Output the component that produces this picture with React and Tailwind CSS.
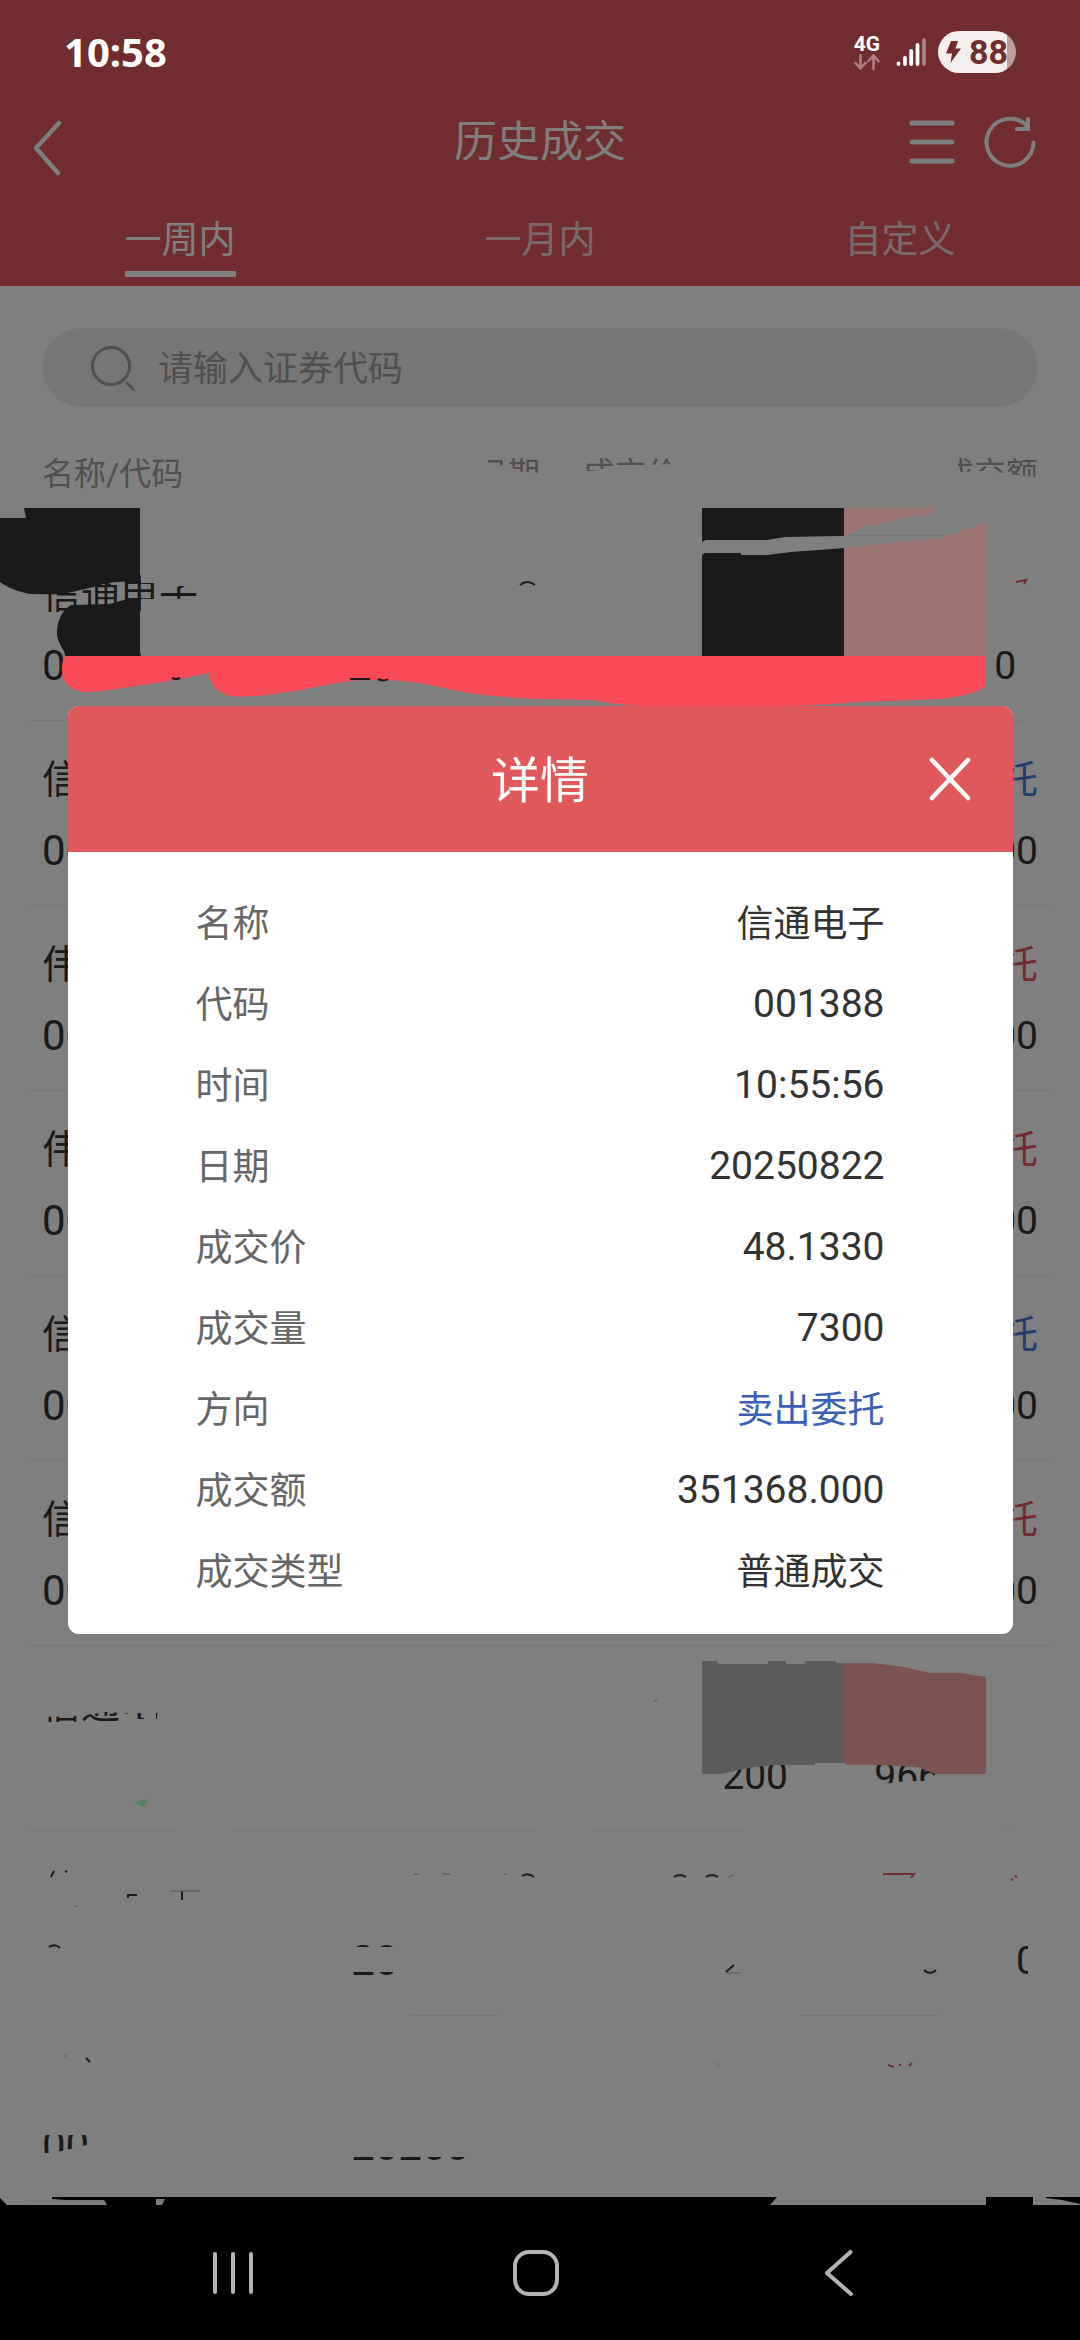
import React, { useState } from "react";

const TABS = ["一周内", "一月内", "自定义"];

const DETAILS = [
  { label: "名称", value: "信通电子" },
  { label: "代码", value: "001388" },
  { label: "时间", value: "10:55:56" },
  { label: "日期", value: "20250822" },
  { label: "成交价", value: "48.1330" },
  { label: "成交量", value: "7300" },
  { label: "方向", value: "卖出委托", blue: true },
  { label: "成交额", value: "351368.000" },
  { label: "成交类型", value: "普通成交" },
];

const TRADES = [
  { name: "信通电子", code: "001388", date: "20250822", amount: "351368.000" },
  { name: "信通电子", code: "001388", side: "卖出委托", amount: "351368.000" },
  { name: "伟隆股份", code: "002871", side: "买入委托", amount: "9660.000" },
  { name: "伟隆股份", code: "002871", side: "买入委托", amount: "9660.000" },
  { name: "信通电子", code: "001388", side: "卖出委托", amount: "9660.000" },
  { name: "信通电子", code: "001388", side: "买入委托", amount: "9660.000" },
  { name: "信通电子", volume: "200", amount: "9660.000" },
  { date: "20250822", amount: "0" },
  { code: "00", date: "20250822" },
];

const StatusBar = () => (
  <div className="relative z-10 flex h-[104px] items-center justify-between px-16 text-white">
    <span className="font-['Noto_Sans','Open_Sans',sans-serif] text-[40px] leading-[48px] font-bold">
      10:58
    </span>
    <div className="flex items-center">
      <div className="flex w-[26px] flex-col items-center">
        <span className="text-[21px] leading-[20px] font-bold">4G</span>
        <svg className="h-4 w-[26px]" viewBox="0 0 26 16" fill="none" stroke="#b07f81" strokeWidth="2.6" strokeLinecap="round" strokeLinejoin="round">
          <path d="M6.500 1v13M1.500 9l5 5.500 5-5.500M19.500 15V2M14.500 7l5-5.500 5 5.500" />
        </svg>
      </div>
      <svg className="ml-4 h-[30px] w-[30px]" viewBox="0 0 30 30" stroke="#fff" strokeWidth="3.800" strokeLinecap="round">
        <path d="M2.500 26.500v.5M9 21v6M15.200 14v13M21.500 8v19" />
        <path d="M28 3v24" stroke="#b07f81" />
      </svg>
      <div className="ml-3 flex h-[42px] w-[78px] items-center justify-center gap-2 rounded-full bg-linear-to-r from-[#f5eeee] from-88% to-[#bf9d9e] to-88% text-[#702c2e]">
        <svg className="h-[22px] w-[15px]" viewBox="0 0 15 22" fill="currentColor">
          <path d="M5 0h7L9.500 7.500H15L4.500 22 6 12.500H0z" />
        </svg>
        <span className="text-[34px] leading-[42px] font-bold">88</span>
      </div>
    </div>
  </div>
);

const TopBar = () => (
  <div className="grid h-[76px] grid-cols-[1fr_auto_1fr] items-center px-8 text-white">
    <button type="button" aria-label="返回" className="justify-self-start pt-3">
      <svg className="h-14 w-8" viewBox="0 0 32 56" fill="none" stroke="currentColor" strokeWidth="4.500" strokeLinecap="round" strokeLinejoin="round">
        <path d="M27 3L4 28l22 25" />
      </svg>
    </button>
    <h1 className="text-[43px] leading-[60px]">历史成交</h1>
    <div className="mr-3 flex items-center gap-[29px] justify-self-end">
      <button type="button" aria-label="菜单">
        <svg className="h-12 w-[46px]" viewBox="0 0 46 48" stroke="currentColor" strokeWidth="5" strokeLinecap="round">
          <path d="M3 5h40M3 24h40M3 43h40" />
        </svg>
      </button>
      <button type="button" aria-label="刷新">
        <svg className="h-[52px] w-[52px]" viewBox="0 0 52 52" fill="none" stroke="currentColor" strokeWidth="4" strokeLinecap="round">
          <path d="M49.500 26.500A23.500 23.500 0 1 1 43 10" />
          <path d="M44 3v10H33" />
        </svg>
      </button>
    </div>
  </div>
);

const SearchBox = () => (
  <label className="mx-[42px] mt-[42px] flex h-[79px] items-center rounded-full bg-[#ededed] pl-12">
    <svg className="h-[46px] w-[46px]" viewBox="0 0 46 46" fill="none" stroke="#a0a0a0" strokeWidth="3" strokeLinecap="round">
      <circle cx="21" cy="21" r="18.500" />
      <path d="M37 38l6.500 6.500" />
    </svg>
    <input
      type="text"
      aria-label="证券代码"
      placeholder="请输入证券代码"
      className="ml-[22px] min-w-0 flex-1 bg-transparent pt-1 text-[35px] leading-[52px] outline-none placeholder:text-[#a0a0a0]"
    />
  </label>
);

const TradeTable = () => (
  <div className="mx-7">
    <table className="w-full table-fixed border-separate border-spacing-0">
      <thead>
        <tr className="h-[129px] text-right text-[32px] text-[#9e9e9e]">
          <th className="w-[30%] pt-1 pl-3.5 text-left font-normal whitespace-nowrap">名称/代码</th>
          <th className="w-1/5 pt-1 font-normal">日期</th>
          <th className="w-1/4 pt-1 pr-2 font-normal whitespace-nowrap">成交价/成交量</th>
          <th className="w-1/4 pt-1 pr-3.5 font-normal">成交额</th>
        </tr>
      </thead>
      <tbody className="text-[39px] leading-[54px] text-[#333]">
        {TRADES.map((trade, i) => (
          <tr key={i} className="h-[185px] text-right align-top">
            <td className="border-b border-[#ebebeb] pt-8 pl-3.5 text-left">
              <div className="h-[54px]">{trade.name}</div>
              <div className="mt-[17px] h-[54px] text-[42px]">{trade.code}</div>
            </td>
            <td className="border-b border-[#ebebeb] pt-[103px]">
              <div className="flex h-[54px] justify-end text-[42px]">{trade.date}</div>
            </td>
            <td className="border-b border-[#ebebeb] pt-[103px] pr-2">{trade.volume}</td>
            <td className="border-b border-[#ebebeb] pt-8 pr-3.5">
              <div className={`h-[54px] ${trade.side === "卖出委托" ? "text-[#4a7bd8]" : "text-[#e1585c]"}`}>
                {trade.side}
              </div>
              <div className="mt-[17px] flex h-[54px] justify-end">{trade.amount}</div>
            </td>
          </tr>
        ))}
      </tbody>
    </table>
  </div>
);

// White brush over the account data, sits below the dim layer
const Wipes = () => (
  <svg className="pointer-events-none absolute top-0 left-0 w-full" viewBox="0 0 1080 2340" aria-hidden="true">
    <g fill="#fff">
      <path d="M465 445h23v45h-23zM503 445h6v30h-6zM470 464l30 1 12 3 10 4 23 1v26h-75z" />
      <path d="M580 471h12l8-2 18-2 27-2 30-1v-18h120v55H580z" />
      <path d="M935 445h23v27h7l20-1 20 2 10 2 25 3v22H935z" />
      <path d="M141 565h70v21h-48l-2-3h-20zM141 599h70v22h-70z" />
      <path d="M141 640h410v45H141z" />
      <path d="M1016 640h26v48h-26zM986 640h9v48h-9z" />
      <path d="M40 1678h165v50h-40v-13l-7-2h-33l-20-1-25 4-40 1zM144 1678h12v50h-12zM125 1719h50v12h-50z" />
      <path d="M870 1784l25-1 10-2h20l10-6 5-20h105v45H870z" />
      <path d="M176 1826h57v8h-57zM534 1826h58v8h-58zM745 1826h259v8H745zM1012 1826h44v8h-44z" />
      <path d="M24 2011h386v8H24zM500 2011h300v8H500zM940 2011h116v8H940z" />
      <path d="M393 1935h150v48H393zM345 1947h50v25h-50z" />
      <path d="M1028 1935h16v48h-16z" />
      <path d="M345 2120h200v37H345zM465 2120h80v50h-80z" />
      <path d="M40 2120h55v15H40zM40 2154l22-3 13-3 15-4v26H40z" />
      <path d="M1021 716h34v8h-34z" />
    </g>
  </svg>
);

// Marker blocks and leftovers on top of the dim layer
const Scribbles = () => (
  <svg className="pointer-events-none absolute top-0 left-0 w-full" viewBox="0 0 1080 2340" aria-hidden="true">
    <g fill="#1a1a1a">
      <path d="M24 508h116v73l-23 1c-17 1-22 6-37 8-20 6-35 4-50 4-20-4-30-12-30-12v-64h26z" />
      <path d="M71 605l39-1 17-5 13-1v58H65c1-5-8-12-8-23s4-22 14-28z" />
      <path d="M702 508h142v28l-4 0-55 1-18 3-61 0-4 2z" />
      <path d="M702 555l3-2h36v2h26l24-3 40-3 13-1v108H702z" />
    </g>
    <g fill="#a07373">
      <path d="M844 508h90l-2 7-20 1-32 8-15 1-15 9-6 1z" />
      <path d="M844 548l66-7 30-2 25-9 21-8v134H844z" />
    </g>
    <path d="M850 535.500h95" stroke="#757575" />
    <path fill="#5c5c5c" d="M702 1661h15l2 3h49v-3h18v3h19v-3h31v2h8v100h-29v2h-40c-25 2-40 6-53 9h-20z" />
    <path fill="#7d5252" d="M844 1663h28l33 4 25 6h30l26 4v97h-51l-17-7-38-2h-33l-3-2z" />
    <path
      fill="#f74a56"
      d="M66 656H986V686C975 694 960 697 940 699L860 702C800 707 740 708 680 708 640 707 610 704 595 700L540 699C500 697 470 695 440 687 410 680 390 680 365 680 340 680 310 690 280 693 260 697 240 697 228 696 215 690 210 683 209 673 190 677 175 680 150 684 120 688 100 692 88 692 75 692 62 685 62 672 61 664 64 656 66 656z"
    />
    <g fill="none" stroke="#1a1a1a" strokeWidth="2">
      <path d="M520 585q7-6 15 0M51 1877l3-6M65 1871l2 1M128 1898v-3h9M182 1891v9M49 1947q6-4 11 1" />
      <path d="M522 1876q6-4 12 1M674 1877q6-4 12 0M706 1877q6-4 12 0M172 678q4 2 8 0M350 679h20M378 679q6 3 10 0" />
      <path d="M726 1972l8-7M924 1970q6 6 12 0M86 2058l4 4" />
    </g>
    <g fill="none" stroke="#555" strokeWidth="1">
      <path d="M170 1891h30M414 1874h5M442 1874h8M504 1874h3M728 1877l6-2M726 1973h14M64 2056h2M717 2063l2 4M654 1702l3-3M74 1906h3" />
    </g>
    <g fill="none" stroke="#712d2f" strokeWidth="2">
      <path d="M883 1874h31l-3 4M1011 1880l2-1M1015 1876l2 1M888 2065l6 2M899 2065h2M909 2066l3-3M1016 582l10-2-2 4" />
    </g>
    <path fill="#56805f" d="M134 1803l8-3 6-1-1 5-5 3z" />
    <path d="M0 2198l7 7H0zM52 2197h725l-7 8H162l3-6h-9v6H107l-3-5H66l-14-1zM986 2197h47v8h-47zM1046 2197h34v7l-18-4-16-2z" />
  </svg>
);

const DetailDialog = ({ onClose }) => (
  <div className="absolute inset-0 flex items-center justify-center">
    <section role="dialog" aria-labelledby="detail-title" className="w-7/8 overflow-hidden rounded-[11px] bg-white">
      <header className="grid h-[146px] grid-cols-[1fr_auto_1fr] items-center bg-[#e1585a] px-[42px] text-white">
        <h2 id="detail-title" className="col-start-2 pt-1.5 text-[49px] leading-[72px]">
          详情
        </h2>
        <button type="button" aria-label="关闭" onClick={onClose} className="justify-self-end">
          <svg className="h-11 w-[42px]" viewBox="0 0 42 44" stroke="currentColor" strokeWidth="4.500" strokeLinecap="round">
            <path d="M3 3l36 38M39 3L3 41" />
          </svg>
        </button>
      </header>
      <dl className="px-32 pt-[30px] pb-[23px]">
        {DETAILS.map((item) => (
          <div key={item.label} className="flex h-[81px] items-center justify-between leading-[54px]">
            <dt className="pt-1 text-[37px] text-[#666]">{item.label}</dt>
            <dd
              className={
                item.blue
                  ? "pt-1 text-[37px] text-[#3a5fb8]"
                  : /\d/.test(item.value)
                    ? "text-[39px] text-[#333]"
                    : "pt-1 text-[37px] text-[#333]"
              }
            >
              {item.value}
            </dd>
          </div>
        ))}
      </dl>
    </section>
  </div>
);

const NavBar = () => (
  <nav className="relative z-10 grid h-[135px] grid-cols-3 items-center justify-items-center pr-[90px] pl-[82px] text-[#b3b3b3]">
    <button type="button" aria-label="最近任务">
      <svg className="h-11 w-10" viewBox="0 0 40 44" stroke="currentColor" strokeWidth="4" strokeLinecap="round">
        <path d="M2 3v38M20 3v38M38 3v38" />
      </svg>
    </button>
    <button type="button" aria-label="主屏幕">
      <svg className="h-[46px] w-[46px]" viewBox="0 0 46 46" fill="none" stroke="currentColor" strokeWidth="4">
        <rect x="2" y="2" width="42" height="42" rx="14" />
      </svg>
    </button>
    <button type="button" aria-label="返回">
      <svg className="h-[46px] w-7" viewBox="0 0 28 46" fill="none" stroke="currentColor" strokeWidth="4" strokeLinecap="round" strokeLinejoin="round">
        <path d="M25.500 2L2 23l24 21" />
      </svg>
    </button>
  </nav>
);

const App = () => {
  const [activeTab, setActiveTab] = useState("一周内");
  const [showDetail, setShowDetail] = useState(true);

  return (
    <div className="relative flex min-h-screen flex-col bg-black font-[Roboto,'Noto_Sans_CJK_SC',sans-serif]">
      <div className="bg-[#e1585c]">
        <StatusBar />
        <TopBar />
        <div className="grid grid-cols-3 justify-items-center pt-[31px] pb-[9px]">
          {TABS.map((tab) => (
            <button
              key={tab}
              type="button"
              onClick={() => setActiveTab(tab)}
              className={`border-b-6 text-[37px] leading-[60px] ${
                activeTab === tab ? "border-white text-white" : "border-transparent text-white/75"
              }`}
            >
              {tab}
            </button>
          ))}
        </div>
      </div>

      <main className="flex-1 bg-white">
        <SearchBox />
        <TradeTable />
      </main>

      <NavBar />

      <Wipes />
      {showDetail && (
        <>
          <div className="absolute inset-0 bg-black/50" />
          <Scribbles />
          <DetailDialog onClose={() => setShowDetail(false)} />
        </>
      )}
    </div>
  );
};

export default App;
